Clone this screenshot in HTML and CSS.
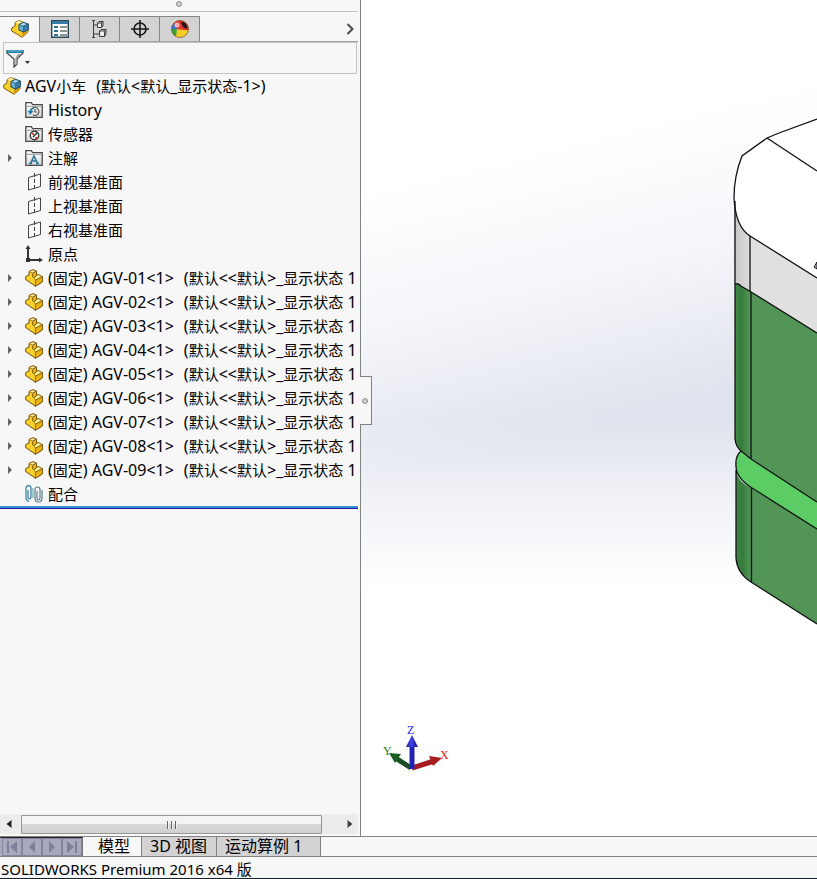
FILE: index.html
```html
<!DOCTYPE html>
<html lang="zh-CN">
<head>
<meta charset="utf-8">
<title>AGV小车</title>
<link rel="stylesheet" href="styles.css">
</head>
<body>
<svg class="defs" aria-hidden="true">
  <defs>
    <linearGradient id="gold" x1="0" y1="0" x2="1" y2="1"><stop offset="0" stop-color="#ffe878"/><stop offset="1" stop-color="#e9b416"/></linearGradient>
    <linearGradient id="folderFill" x1="0" y1="0" x2="0" y2="1"><stop offset="0" stop-color="#fff"/><stop offset="1" stop-color="#d8d8d8"/></linearGradient>
    <symbol id="part" viewBox="0 0 18 18">
      <path d="M.7 7.500 4 6V2.500L8 .7l3.500 1.500v4L13 5.500l4.300 2.200v5.300l-6.800 4.300L.7 10.500z" fill="#f8cf27" stroke="#6b4b0c" stroke-linejoin="round"/>
      <path d="M4 2.500 8 .7l3.500 1.500-4 2zM9 8.500l4-3 4.300 2.200-6.800 3.500z" fill="#ffec96" stroke="#7b5a12" stroke-width=".7" stroke-linejoin="round"/>
      <path d="M7.500 4.200 11.500 2.200v4.500L9 8.500 7.500 8zM10.500 11.200l6.800-3.500v5.300l-6.800 4.300z" fill="#e8b012" stroke="#7b5a12" stroke-width=".8" stroke-linejoin="round"/>
    </symbol>
    <symbol id="assembly" viewBox="0 0 18 18">
      <path d="M.7 8 4 6V2.500L8 .7l3.500 1L17 5v7l-6 5.300L.7 11z" fill="#f8cf27" stroke="#7d5c10" stroke-linejoin="round"/>
      <path d="m4 2.500 4-1.800 3.500 1.500L8 4z" fill="#ffec96"/>
      <path d="M11 12.500 17 9v3.500l-6 4.800z" fill="#d99c10"/>
      <path d="m8 4.500 4.500-2L17.200 4v5.500l-4.500 2.500L8 10z" fill="#69aed2" stroke="#174c6c" stroke-linejoin="round"/>
      <path d="m8 4.500 4.700 1.700L17.200 4l-4.700-1.500z" fill="#a9dced" stroke="#174c6c" stroke-width=".7"/>
      <path d="M12.700 6.200V12l4.500-2.500V4z" fill="#3b82aa" stroke="#174c6c" stroke-width=".7"/>
    </symbol>
    <symbol id="folder" viewBox="0 0 18 18">
      <path d="M.8 16.300V1.700h5.400l1.500 2h9.500v12.600z" fill="url(#folderFill)" stroke="#484848" stroke-width="1.300"/>
      <path d="M1 5.300h16" stroke="#999"/>
    </symbol>
    <symbol id="plane" viewBox="0 0 18 18">
      <path d="M3.500 4.500 15.500 1v12.500l-12 3.500z" fill="none" stroke="#444"/>
      <path d="M9.500 0v18" stroke="#444" stroke-dasharray="4 2"/>
    </symbol>
    <symbol id="arrow" viewBox="0 0 6 8"><path d="M1 0v8l4-4z" fill="#646464"/></symbol>
    <linearGradient id="edge" x1="0" x2="1"><stop offset="0" stop-color="#3f8746"/><stop offset=".4" stop-color="#367c3c"/><stop offset="1" stop-color="#529859"/></linearGradient>
    <linearGradient id="greyEdge" x1="0" x2="1"><stop offset="0" stop-color="#c8c8c8"/><stop offset="1" stop-color="#dcdcdc"/></linearGradient>
    <linearGradient id="blueCone" x1="0" x2="1"><stop offset="0" stop-color="#171770"/><stop offset=".4" stop-color="#4545ee"/><stop offset="1" stop-color="#12128a"/></linearGradient>
  </defs>
</svg>

<main class="workspace">
  <aside class="panel">
    <div class="splitter"><i class="grip"></i></div>
    <nav class="tabs">
      <button class="tab active" aria-label="设计树"><svg width="18" height="18"><use href="#assembly"/></svg></button>
      <button class="tab" aria-label="属性"><svg width="18" height="18" viewBox="0 0 18 18"><path d="M.7.700h16.600v16.600H.7z" fill="#fff" stroke="#28485a" stroke-width="1.400"/><path d="M1 1h16v3H1z" fill="#347da4"/><path d="M3 6h4v2H3zM3 10h4v2H3zM3 14h4v2H3z" fill="#2c7196"/><path d="M9 7h7M9 11h7M9 15h7" stroke="#222"/></svg></button>
      <button class="tab" aria-label="配置"><svg width="18" height="18" viewBox="0 0 18 18" fill="#eee" stroke="#3c3c3c"><path d="M2.500 1v16M3 5h4M3 14h6M1 .5h3M1 17.500h3" fill="none"/><path d="M6.500 3 8 1.500h4V6L10.500 7.500h-4zM8.500 11l1.500-1.500h5V14l-1.500 2.500h-5z"/><path d="M6.500 3h4v4M8.500 11h5v5M10.500 3 12 1.500M13.500 11 15 9.500" fill="none"/></svg></button>
      <button class="tab" aria-label="尺寸"><svg width="18" height="18" viewBox="0 0 18 18" fill="none" stroke="#181818" stroke-width="1.600"><circle cx="9" cy="9" r="6"/><path d="M9 0v18M0 9h18"/></svg></button>
      <button class="tab" aria-label="外观"><svg width="18" height="18" viewBox="0 0 18 18"><circle cx="9" cy="9" r="8.500" fill="#f3cf26"/><path d="M2 4.500A8.500 8.500 0 0 1 9 .5L12 10 4 9z" fill="#e43d34"/><path d="M.5 9H6l-1 7.500A8.500 8.500 0 0 1 .5 9z" fill="#36a23b"/><path d="M.5 9A8 8 0 0 1 3 3l3 6z" fill="#3978cf"/><path d="m8 .5 4 9.500h5.500A8.500 8.500 0 0 0 8 .5z" fill="#e02e2d"/><path d="M10 2q5-1 6.500 6-3 1-5-2z" fill="#181818"/><circle cx="9" cy="9" r="8.500" fill="none" stroke="#7a4525" stroke-width=".7"/><circle cx="6" cy="5" r="2.500" fill="#fff" opacity=".6"/></svg></button>
      <button class="more" aria-label="更多"><svg width="8" height="12" viewBox="0 0 8 12"><path d="m1.500 1 5 5-5 5" fill="none" stroke="#4c4c4c" stroke-width="2"/></svg></button>
    </nav>
    <div class="filter">
      <button class="filter-button" aria-label="过滤器"><svg width="24" height="20" viewBox="0 0 24 20"><path d="M1 2h16v2l-6 6v5l-3 3v-8L1 4z" fill="#efefef" stroke="#444" stroke-width="1.200"/><path d="M.5 1h17v3H.5z" fill="#287fa5"/><path d="M2 2h14" stroke="#6ebad7"/><path d="M12 5 9.500 9v7l1.500-1v-5l4-5z" fill="#999"/><path d="M19 12h5l-2.500 3z" fill="#333"/></svg></button>
    </div>
    <ul class="tree">
      <li class="row root"><svg class="icon"><use href="#assembly"/></svg><span class="label">AGV<span class="zh">小车</span></span><span class="config">(<span class="zh">默认</span>&lt;<span class="zh">默认</span>_<span class="zh">显示状态</span>-1&gt;)</span></li>
      <li class="row"><i class="twist"></i><svg class="icon" viewBox="0 0 18 18"><use href="#folder"/><path d="M6 11a4 4 0 1 1 2 3M10 8v3h2" fill="none" stroke="#555" stroke-width="1.100"/><path d="M2.500 10h6L5.500 13.500z" fill="#1d7eab"/><path d="M5 11a5 5 0 0 1 4-4" fill="none" stroke="#1d7eab" stroke-width="1.500"/></svg><span class="label">History</span></li>
      <li class="row"><i class="twist"></i><svg class="icon" viewBox="0 0 18 18"><use href="#folder"/><circle cx="9.500" cy="10.500" r="4.200" fill="#fff" stroke="#333" stroke-width="1.400"/><path d="m8 12 4-4" stroke="#222" stroke-width="1.300"/><path d="M10 12h3l-1 2h-2zM7 8h2v2H7z" fill="#e64a2e"/></svg><span class="label zh">传感器</span></li>
      <li class="row"><svg class="twist"><use href="#arrow"/></svg><svg class="icon" viewBox="0 0 18 18"><use href="#folder"/><path d="M5.500 14.500 9 7l3.500 7.500M7 12h4M4 14.500h3M11 14.500h3" fill="none" stroke="#277397" stroke-width="1.500"/></svg><span class="label zh">注解</span></li>
      <li class="row"><i class="twist"></i><svg class="icon"><use href="#plane"/></svg><span class="label zh">前视基准面</span></li>
      <li class="row"><i class="twist"></i><svg class="icon"><use href="#plane"/></svg><span class="label zh">上视基准面</span></li>
      <li class="row"><i class="twist"></i><svg class="icon"><use href="#plane"/></svg><span class="label zh">右视基准面</span></li>
      <li class="row"><i class="twist"></i><svg class="icon" viewBox="0 0 18 18"><path d="M3 3v12h12" fill="none" stroke="#333" stroke-width="2"/><path d="m3 0 2.500 4H.5zM18 15l-4 2.500v-5zM1 13h4v4H1z" fill="#333"/></svg><span class="label zh">原点</span></li>
      <li class="row"><svg class="twist"><use href="#arrow"/></svg><svg class="icon"><use href="#part"/></svg><span class="label">(<span class="zh">固定</span>) AGV-01&lt;1&gt;</span> <span class="config">(<span class="zh">默认</span>&lt;&lt;<span class="zh">默认</span>&gt;_<span class="zh">显示状态</span> 1</span></li>
      <li class="row"><svg class="twist"><use href="#arrow"/></svg><svg class="icon"><use href="#part"/></svg><span class="label">(<span class="zh">固定</span>) AGV-02&lt;1&gt;</span> <span class="config">(<span class="zh">默认</span>&lt;&lt;<span class="zh">默认</span>&gt;_<span class="zh">显示状态</span> 1</span></li>
      <li class="row"><svg class="twist"><use href="#arrow"/></svg><svg class="icon"><use href="#part"/></svg><span class="label">(<span class="zh">固定</span>) AGV-03&lt;1&gt;</span> <span class="config">(<span class="zh">默认</span>&lt;&lt;<span class="zh">默认</span>&gt;_<span class="zh">显示状态</span> 1</span></li>
      <li class="row"><svg class="twist"><use href="#arrow"/></svg><svg class="icon"><use href="#part"/></svg><span class="label">(<span class="zh">固定</span>) AGV-04&lt;1&gt;</span> <span class="config">(<span class="zh">默认</span>&lt;&lt;<span class="zh">默认</span>&gt;_<span class="zh">显示状态</span> 1</span></li>
      <li class="row"><svg class="twist"><use href="#arrow"/></svg><svg class="icon"><use href="#part"/></svg><span class="label">(<span class="zh">固定</span>) AGV-05&lt;1&gt;</span> <span class="config">(<span class="zh">默认</span>&lt;&lt;<span class="zh">默认</span>&gt;_<span class="zh">显示状态</span> 1</span></li>
      <li class="row"><svg class="twist"><use href="#arrow"/></svg><svg class="icon"><use href="#part"/></svg><span class="label">(<span class="zh">固定</span>) AGV-06&lt;1&gt;</span> <span class="config">(<span class="zh">默认</span>&lt;&lt;<span class="zh">默认</span>&gt;_<span class="zh">显示状态</span> 1</span></li>
      <li class="row"><svg class="twist"><use href="#arrow"/></svg><svg class="icon"><use href="#part"/></svg><span class="label">(<span class="zh">固定</span>) AGV-07&lt;1&gt;</span> <span class="config">(<span class="zh">默认</span>&lt;&lt;<span class="zh">默认</span>&gt;_<span class="zh">显示状态</span> 1</span></li>
      <li class="row"><svg class="twist"><use href="#arrow"/></svg><svg class="icon"><use href="#part"/></svg><span class="label">(<span class="zh">固定</span>) AGV-08&lt;1&gt;</span> <span class="config">(<span class="zh">默认</span>&lt;&lt;<span class="zh">默认</span>&gt;_<span class="zh">显示状态</span> 1</span></li>
      <li class="row"><svg class="twist"><use href="#arrow"/></svg><svg class="icon"><use href="#part"/></svg><span class="label">(<span class="zh">固定</span>) AGV-09&lt;1&gt;</span> <span class="config">(<span class="zh">默认</span>&lt;&lt;<span class="zh">默认</span>&gt;_<span class="zh">显示状态</span> 1</span></li>
      <li class="row"><i class="twist"></i><svg class="icon" viewBox="0 0 18 18" fill="none" stroke-width="1.200"><path d="M3 5v7q0 2 1.500 2T6 12V3Q6 .7 3.700.7T1 3v9q0 4 3 4.500" stroke="#347b9e"/><path d="M12 6v7q0 2 1.500 2t1.500-2V5q0-3-2.500-3T10 5v8q0 4 3.500 4t3.500-4V5" stroke="#5a7f92"/><path d="M8 3v10" stroke="#6fa8c2"/></svg><span class="label zh">配合</span></li>
    </ul>
    <div class="rollback"></div>
    <div class="scrollbar">
      <button class="scroll-arrow" aria-label="向左"><svg width="6" height="8" viewBox="0 0 6 8"><path d="M5.500 0v8L.5 4z" fill="#222"/></svg></button>
      <div class="track"><div class="thumb"><i></i><i></i><i></i></div></div>
      <button class="scroll-arrow" aria-label="向右"><svg width="6" height="8" viewBox="0 0 6 8"><path d="M.5 0v8l5-4z" fill="#444"/></svg></button>
    </div>
    <button class="handle" aria-label="折叠面板"><i class="grip"></i></button>
  </aside>
  <section class="viewport" aria-label="模型视图">
    <svg class="model" width="87" height="520" viewBox="730 110 87 520">
      <path d="M817 119 779 133l-12 5-25 18q-8 20-8 42c1 18 5 31 16 38l67 42z" fill="#fff"/>
      <path d="M734 198c1 18 5 31 16 38v56l-11-7-5-1z" fill="url(#greyEdge)"/>
      <path d="m750 236 67 42v55l-67-42z" fill="#e0e0e0"/>
      <path d="M735 284q3-1 6 2l10 6v167q-16-10-16-20z" fill="url(#edge)"/>
      <path d="m750 291 67 42v169l-66-43z" fill="#529557"/>
      <path d="M736 470q2 13 16 18v94q-15-9-16-24z" fill="url(#edge)"/>
      <path d="m751 488 66 40v96l-66-42z" fill="#529557"/>
      <path d="M741 451q-6 5-5 15 0 12 16 22l65 41v-27l-67-43z" fill="#5ccd65"/>
      <g fill="none" stroke="#111" stroke-width="1.300">
        <path d="M817 119 779 133l-12 5-25 18q-8 20-8 42c1 18 5 31 16 38l67 42M767 138l50 33"/>
        <path d="M735 201v238q1 8 6 12l10 8 66 43M750 236v55l1 1v167M735 284q3-1 6 2l10 6 66 41M741 451q-6 5-5 15 0 12 16 22l65 41M736 470v88q1 15 15 24l66 42M751.500 488v94"/>
      </g>
      <path d="m817 262-3 5 3 2z" fill="#c8b3c8" stroke="#111"/>
    </svg>
    <svg class="triad" width="72" height="54" viewBox="380 720 72 54">
      <path d="m411 768-17-11" stroke="#174d20" stroke-width="5"/><path d="m389 753 12 1-6 9z" fill="#176021"/>
      <path d="m412 768 22-7" stroke="#a51d20" stroke-width="5"/><path d="m442 758-13-2 4 10z" fill="#a51d20"/>
      <path d="M412 769v-24" stroke="#2020b2" stroke-width="5"/><path d="m412 735-6 12h12z" fill="url(#blueCone)"/>
      <text x="407" y="734" fill="#2222f5">Z</text><text x="383" y="755" fill="#16831c">Y</text><text x="440" y="759" fill="#ef1d1d">X</text>
    </svg>
  </section>
</main>
<nav class="sheets">
  <div class="steps">
    <button aria-label="第一个"><svg width="12" height="12" viewBox="0 0 12 12"><path d="M1 0h2v12H1zM11 0v12L4 6z"/></svg></button>
    <button aria-label="上一个"><svg width="12" height="12" viewBox="0 0 12 12"><path d="M9 0v12L3 6z"/></svg></button>
    <button aria-label="下一个"><svg width="12" height="12" viewBox="0 0 12 12"><path d="M3 0v12l6-6z"/></svg></button>
    <button aria-label="最后一个"><svg width="12" height="12" viewBox="0 0 12 12"><path d="M9 0h2v12H9zM1 0v12l7-6z"/></svg></button>
  </div>
  <button class="sheet current">模型</button>
  <button class="sheet">3D 视图</button>
  <button class="sheet last">运动算例 1</button>
</nav>
<footer class="status">SOLIDWORKS Premium 2016 x64 版</footer>
</body>
</html>
```

FILE: styles.css
```css
* { box-sizing: border-box; }
body {
  margin: 0;
  height: 100vh;
  display: flex;
  flex-direction: column;
  overflow: hidden;
  background: #f7f7f7;
  color: #000;
  font: 15px/24px "Noto Sans", "Noto Sans CJK SC", sans-serif;
}
button { margin: 0; padding: 0; border: 0; background: none; color: inherit; font: inherit; }
svg { display: block; flex: none; }
.defs { position: absolute; width: 0; height: 0; }

.workspace { flex: 1; min-height: 0; display: flex; }
.panel {
  position: relative;
  width: 361px;
  flex: none;
  display: flex;
  flex-direction: column;
  border-right: 1px solid #828282;
}
.splitter {
  height: 12px;
  margin-right: 2px;
  display: flex;
  justify-content: center;
  border-bottom: 1px solid #c3c3c3;
}
.grip {
  width: 6px;
  height: 6px;
  border: 1px solid #8b8b8b;
  border-radius: 50%;
  background: #d0d0d0;
}
.splitter .grip { margin-top: 1px; }

.tabs { display: flex; height: 30px; padding-top: 4px; margin-right: 2px; border-bottom: 1px solid #a3a3a3; }
.tab {
  width: 40px;
  display: flex;
  align-items: center;
  justify-content: center;
  border-top: 1px solid #858585;
  border-right: 1px solid #858585;
  background: #d3d3d3;
}
.tab.active { background: #f7f7f7; margin-bottom: -1px; padding-bottom: 2px; }
.more { width: 16px; margin-left: auto; display: flex; align-items: center; justify-content: center; }

.filter { height: 32px; margin: 0 3px; border: 1px solid #c3c3c3; padding: 6px 2px; }

.tree { flex: none; list-style: none; margin: 0 2px 0 0; padding: 0; overflow: hidden; font-size: 16px; }
.row { height: 24px; display: flex; align-items: center; padding-left: 7px; white-space: nowrap; }
.row.root { padding-left: 3px; }
.label { margin-left: 5px; }
.root .label { margin-left: 4px; }
.config { margin-left: 10px; }
.zh { font-size: 15px; }
.icon { width: 18px; height: 18px; }
.twist { width: 6px; height: 8px; margin-right: 12px; flex: none; }
.rollback { height: 3px; margin-right: 2px; border-bottom: 1px solid #2419a8; background: #3292d0; }

.scrollbar { height: 20px; margin: auto 2px 2px 0; display: flex; background: #ececec; }
.scroll-arrow { width: 17px; display: flex; align-items: center; justify-content: center; }
.track { flex: 1; padding: 1px 19px 0 4px; }
.thumb {
  height: 19px;
  display: flex;
  gap: 2px;
  align-items: center;
  justify-content: center;
  border: 1px solid #969696;
  border-radius: 1px;
  background: linear-gradient(#f4f4f4 45%, #d9d9d9 50%, #d0d0d0);
}
.thumb i { width: 2px; height: 8px; background: linear-gradient(90deg, #666 50%, #eee 50%); }
.handle {
  position: absolute;
  z-index: 1;
  top: 376px;
  right: -12px;
  width: 12px;
  height: 49px;
  display: flex;
  align-items: center;
  padding-left: 2px;
  border: 1px solid #828282;
  border-left: 0;
  background: #f7f7f7;
}

.viewport {
  position: relative;
  flex: 1;
  min-width: 0;
  overflow: hidden;
  background:
    linear-gradient(180deg, rgba(255,255,255,0) 50%, rgba(255,255,255,.55) 60%, #fff 70%),
    linear-gradient(166deg, #fff 20%, #f5f6fa 35%, #dfe3ed 51%);
}
.model { position: absolute; top: 110px; right: 0; }
.triad { position: absolute; left: 19px; bottom: 62px; font: 12px "Liberation Serif", serif; }

.sheets { height: 21px; display: flex; border-top: 1px solid #828282; border-bottom: 1px solid #828282; }
.steps { display: flex; width: 83px; flex: none; padding-left: 2px; border-top: 1px solid #222; border-right: 1px solid #777; background: #a9a9be; }
.steps button { flex: 1; display: flex; align-items: center; justify-content: center; border: 1px solid #8585a0; fill: #7f7f9b; }
.sheet { padding: 0 9px 0 8px; line-height: 19px; font-size: 16px; border-left: 1px solid #828282; background: #d3d3d3; }
.sheet.current { padding: 0 11px 0 15px; border-left: 0; background: #f7f7f7; }
.sheet.last { padding: 0 18px 0 8px; border-right: 1px solid #828282; }
.status { height: 22px; padding-left: 1px; line-height: 24px; white-space: nowrap; overflow: hidden; border-bottom: 1px solid #14202c; }
```
